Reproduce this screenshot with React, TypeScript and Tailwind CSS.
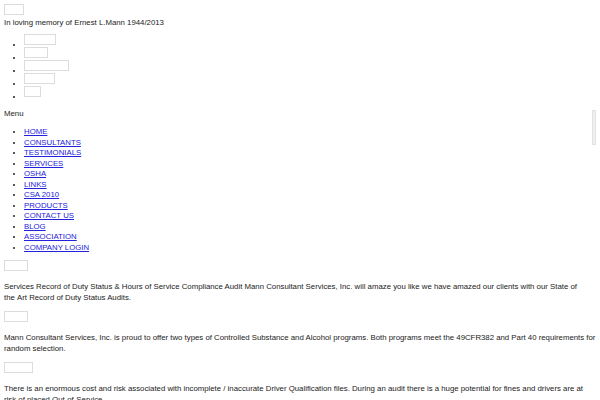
const topLinks = [32, 24, 45, 31, 17];

const menu = [
  "HOME",
  "CONSULTANTS",
  "TESTIMONIALS",
  "SERVICES",
  "OSHA",
  "LINKS",
  "CSA 2010",
  "PRODUCTS",
  "CONTACT US",
  "BLOG",
  "ASSOCIATION",
  "COMPANY LOGIN",
];

const sections = [
  {
    w: 24,
    text: "Services Record of Duty Status & Hours of Service Compliance Audit Mann Consultant Services, Inc. will amaze you like we have amazed our clients with our State of the\u00a0Art Record of Duty Status Audits.",
  },
  {
    w: 24,
    text: "Mann Consultant Services, Inc. is proud to offer two types of Controlled Substance and Alcohol programs. Both programs meet the 49CFR382 and Part 40 requirements for random selection.",
  },
  {
    w: 29,
    text: "There is an enormous cost and risk associated with incomplete / inaccurate Driver Qualification files. During an audit there is a huge potential for fines and drivers are at risk of placed Out-of-Service.",
  },
];

function Img({ w }: { w: number }) {
  return (
    <span
      className="inline-block h-[11px] border border-[#dcdcdc] align-[2px]"
      style={{ width: w }}
    />
  );
}

export default function App() {
  return (
    <div className="bg-white p-[4px] font-['Liberation_Sans',Arial,sans-serif] text-[7.8px] leading-[10.5px] text-[#222]">
      <div className="h-[11px]">
        <span className="inline-block h-[11px] w-[20px] border border-[#dcdcdc] align-top" />
      </div>
      <p className="mt-[3px]">In loving memory of Ernest L.Mann 1944/2013</p>

      <ul className="mt-[5px] list-disc pl-[20px]">
        {topLinks.map((w, i) => (
          <li key={i} className="h-[13px]">
            <a href="#">
              <Img w={w} />
            </a>
          </li>
        ))}
      </ul>

      <div className="mt-[10px]">
        <span className="float-right mt-[1px] h-[35px] w-[4px] border border-[#e2e2e2] bg-[#f0f0f0]" />
        <p>Menu</p>
      </div>

      <ul className="mt-[8px] list-disc pl-[20px]">
        {menu.map((m) => (
          <li key={m}>
            <a href="#" className="text-[#2222dd] underline">
              {m}
            </a>
          </li>
        ))}
      </ul>

      {sections.map((s, i) => (
        <div key={i} className={i === 0 ? "mt-[7px]" : "mt-[8px]"}>
          <div className="h-[11px]">
            <span
              className="inline-block h-[11px] border border-[#dcdcdc] align-top"
              style={{ width: s.w }}
            />
          </div>
          <p className="mt-[10px] leading-[11px]">{s.text}</p>
        </div>
      ))}
    </div>
  );
}
